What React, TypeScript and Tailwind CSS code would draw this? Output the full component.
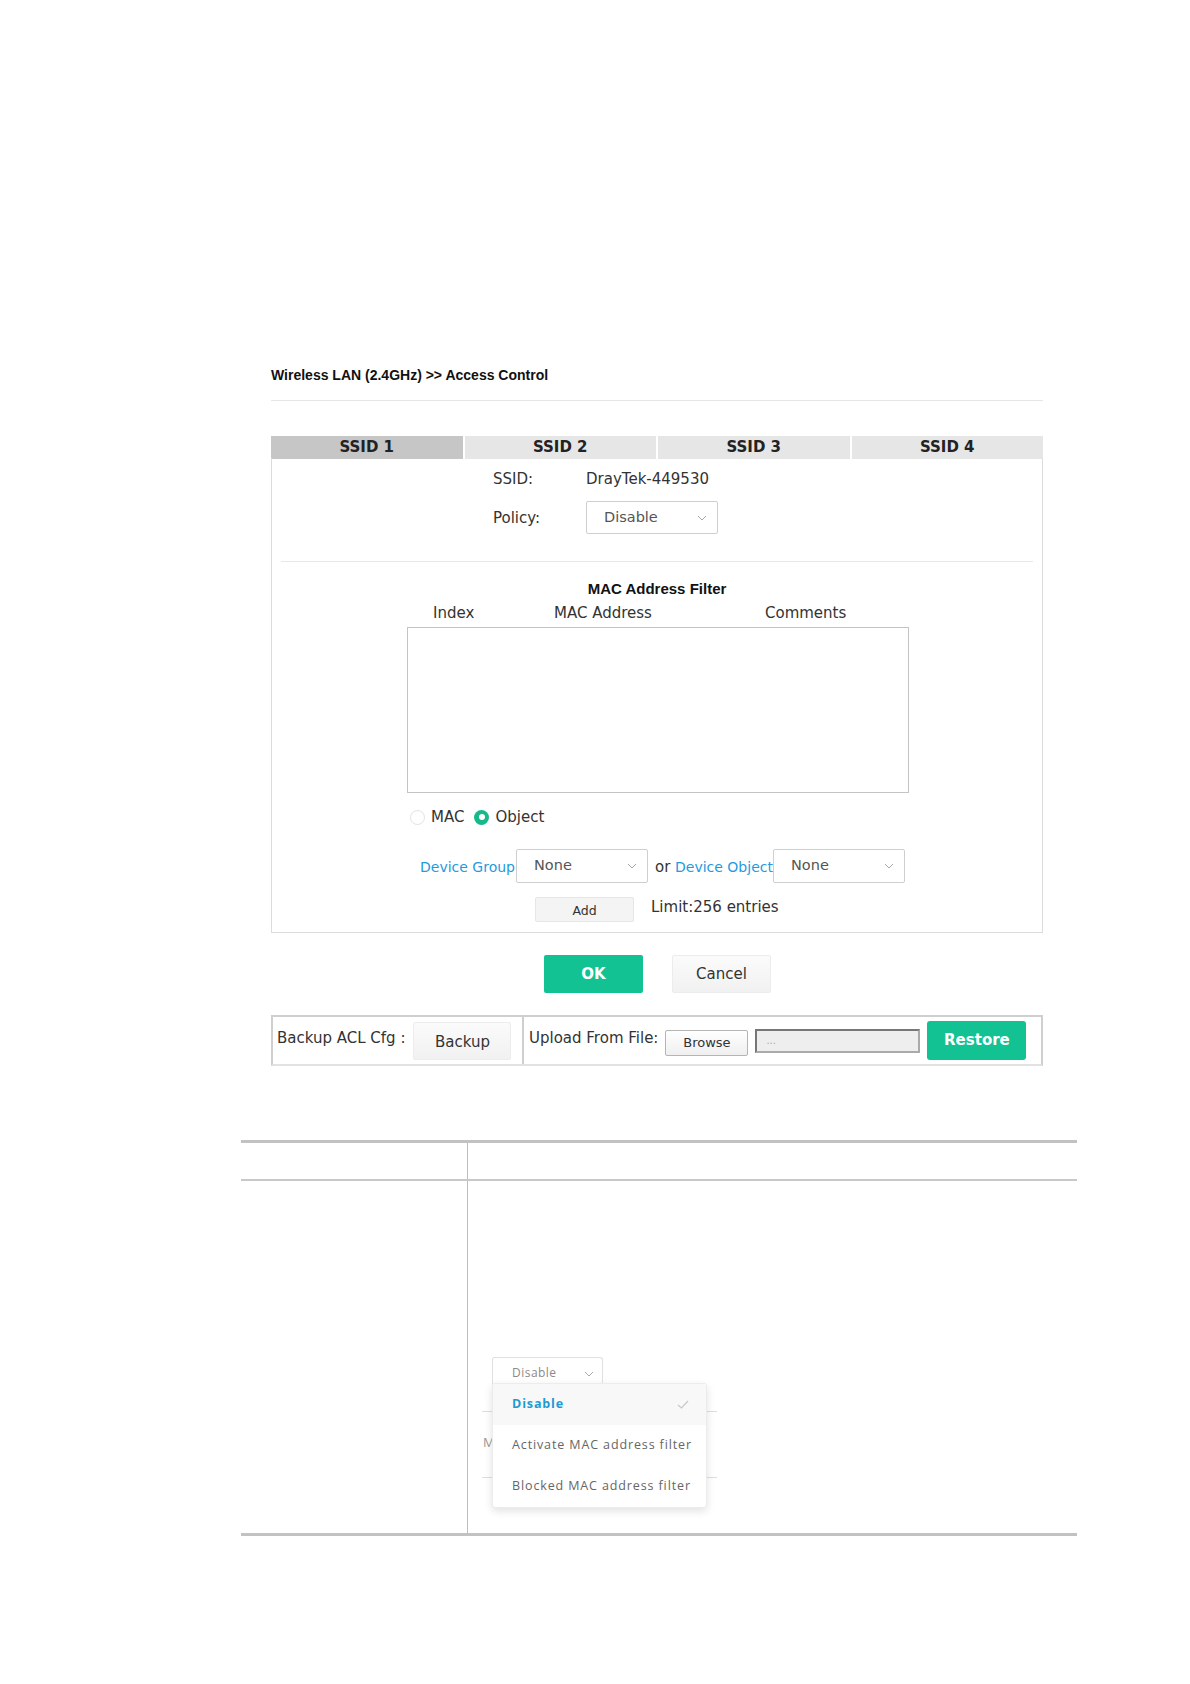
import React from 'react';

const body = { fontFamily: '"DejaVu Sans", Verdana, sans-serif' };
const arial = { fontFamily: '"Liberation Sans", Arial, sans-serif' };
const open = { fontFamily: '"Open Sans", "DejaVu Sans", sans-serif' };

function Chevron({ className = '' }: { className?: string }) {
    return (
        <svg width="10" height="6" viewBox="0 0 10 6" className={className}>
            <polyline points="1,1 5,5 9,1" fill="none" stroke="#a8a8a8" strokeWidth="1" />
        </svg>
    );
}

function Select({ value, width }: { value: string; width: string }) {
    return (
        <div className={`${width} h-full flex items-center justify-between border border-[#cfcfcf] rounded-[2px] bg-white pl-[17px] pr-[10px] text-[14.5px] text-[#555]`}>
            <span>{value}</span>
            <Chevron />
        </div>
    );
}

export default function App() {
    const tabs = ['SSID 1', 'SSID 2', 'SSID 3', 'SSID 4'];

    return (
        <div className="w-[1190px] h-[1684px] bg-white text-[#333] overflow-hidden" style={body}>
            <div className="ml-[271px] w-[772px] pt-[366px] flex flex-col">
                {/* Title */}
                <div className="h-[18px] leading-[18px] text-[14px] font-bold text-[#111]" style={arial}>
                    Wireless LAN (2.4GHz) &gt;&gt; Access Control
                </div>
                <div className="mt-[16px] h-px bg-[#e6e6e6]" />

                {/* Tabs */}
                <div className="mt-[35px] h-[22px] grid grid-cols-4 gap-[2px]">
                    {tabs.map((t, i) => (
                        <div
                            key={t}
                            className={`flex items-center justify-center text-[15px] font-bold text-[#222] ${i === 0 ? 'bg-[#c6c6c6]' : 'bg-[#e6e6e6]'}`}
                        >
                            {t}
                        </div>
                    ))}
                </div>

                {/* Panel */}
                <div className="h-[475px] border border-t-0 border-[#dcdcdc] flex flex-col text-[15px]">
                    <div className="mt-[11px] h-[20px] flex items-center pl-[221px]">
                        <span className="w-[93px]">SSID:</span>
                        <span>DrayTek-449530</span>
                    </div>
                    <div className="mt-[12px] h-[33px] flex items-center pl-[221px]">
                        <span className="w-[93px] pt-[2px]">Policy:</span>
                        <Select value="Disable" width="w-[132px]" />
                    </div>
                    <div className="mt-[27px] mx-[9px] h-px bg-[#e8e8e8]" />

                    <div className="mt-[18px] h-[18px] leading-[18px] text-center text-[15px] font-bold text-[#111]" style={arial}>
                        MAC Address Filter
                    </div>
                    <div className="mt-[6px] h-[18px] leading-[18px] flex pl-[161px]">
                        <span className="w-[121px]">Index</span>
                        <span className="w-[211px]">MAC Address</span>
                        <span>Comments</span>
                    </div>
                    <div className="mt-[5px] ml-[135px] w-[502px] h-[166px] border border-[#c4c4c4]" />

                    {/* Radios */}
                    <div className="mt-[14px] h-[20px] ml-[138px] flex items-center">
                        <span className="w-[15px] h-[15px] rounded-full border border-[#e2e2e2] bg-white" />
                        <span className="ml-[6px]">MAC</span>
                        <span className="ml-[10px] w-[15px] h-[15px] rounded-full bg-[#17b98a] flex items-center justify-center">
                            <span className="w-[6px] h-[6px] rounded-full bg-white" />
                        </span>
                        <span className="ml-[6px]">Object</span>
                    </div>

                    {/* Device row */}
                    <div className="mt-[22px] h-[34px] flex items-center text-[14px]">
                        <span className="ml-[148px] w-[96px] text-[#1f9be0] pt-[3px] whitespace-nowrap">Device Group</span>
                        <Select value="None" width="w-[132px]" />
                        <span className="w-[27px] pl-[7px] text-[15px] pt-[3px]">or</span>
                        <span className="w-[98px] text-[#1f9be0] pt-[3px] whitespace-nowrap">Device Object</span>
                        <Select value="None" width="w-[132px]" />
                    </div>

                    {/* Add row */}
                    <div className="mt-[14px] h-[25px] flex items-center">
                        <button className="ml-[263px] w-[99px] h-full bg-[#f4f4f4] border border-[#e6e6e6] rounded-[2px] text-[12.5px] text-[#333] pt-[3px]">
                            Add
                        </button>
                        <span className="ml-[17px] -mt-[4px]">Limit:256 entries</span>
                    </div>
                </div>

                {/* OK / Cancel */}
                <div className="mt-[22px] h-[38px] flex gap-[29px] pl-[273px]">
                    <button className="w-[99px] h-full rounded-[2px] bg-[#12c292] text-white text-[15px] font-bold">OK</button>
                    <button className="w-[99px] h-full rounded-[2px] bg-gradient-to-b from-[#fbfbfb] to-[#f1f1f1] border border-[#ececec] text-[15px] text-[#333]">
                        Cancel
                    </button>
                </div>

                {/* Backup / Restore */}
                <div className="mt-[22px] h-[51px] border-2 border-[#cfcfcf] border-b-[#e2e2e2] flex">
                    <div className="w-[249px] flex items-center pl-[4px] text-[15px]">
                        <span className="pb-[4px] whitespace-nowrap">Backup ACL Cfg :</span>
                        <button className="ml-[8px] w-[98px] h-[38px] rounded-[2px] bg-gradient-to-b from-[#fbfbfb] to-[#f1f1f1] border border-[#ececec] text-[15px] text-[#333] pt-[3px]">
                            Backup
                        </button>
                    </div>
                    <div className="flex-1 border-l-2 border-[#cfcfcf] flex items-center pl-[5px] text-[15px]">
                        <span className="pb-[4px] whitespace-nowrap">Upload From File:</span>
                        <button className="ml-[7px] w-[83px] h-[26px] mt-[4px] rounded-[2px] bg-gradient-to-b from-white to-[#efefef] border border-[#b5b5b5] text-[13px] text-[#333]">
                            Browse
                        </button>
                        <div className="ml-[7px] w-[165px] h-[24px] bg-[#eeeeee] border-2 border-[#777] border-r-[#aaa] border-b-[#aaa] flex items-center pl-[9px] text-[10px] text-[#aaa]">
                            ...
                        </div>
                        <button className="ml-[7px] w-[99px] h-[39px] rounded-[3px] bg-[#12c292] text-white text-[15px] font-bold">
                            Restore
                        </button>
                    </div>
                </div>
            </div>

            {/* Lower table */}
            <div className="mt-[74px] ml-[241px] w-[836px] border-t-[3px] border-b-[3px] border-[#c2c2c2]">
                <div className="h-[38px] grid grid-cols-[227px_1fr] border-b-2 border-[#c8c8c8]">
                    <div className="border-r-[1.5px] border-[#bdbdbd]" />
                    <div />
                </div>
                <div className="h-[352px] grid grid-cols-[227px_1fr]">
                    <div className="border-r-[1.5px] border-[#bdbdbd]" />
                    <div className="pl-[24px] pt-[176px]">
                        <div className="relative w-[225px]" style={open}>
                            <div className="w-[111px] h-[30px] flex items-center justify-between border border-[#e0e0e0] border-b-0 rounded-t-[3px] pl-[19px] pr-[8px] text-[12px] tracking-[0.04em] text-[#8a8a8a]">
                                <span>Disable</span>
                                <Chevron className="mt-[3px]" />
                            </div>
                            <div className="mt-[24px] -ml-[10px] w-[235px] h-[67px] border-t border-b border-[#dedede] flex items-center text-[13px] text-[#999]">
                                <span className="pl-[1px] pb-[4px]">M</span>
                            </div>

                            {/* Open dropdown menu */}
                            <div className="absolute top-[26px] left-0 w-[215px] h-[125px] bg-white border border-[#ececec] rounded-[3px] shadow-[0_3px_8px_rgba(0,0,0,0.12)] flex flex-col text-[12.5px] tracking-[0.07em]">
                                <div className="h-[41px] bg-[#f8f8f8] flex items-center justify-between pl-[19px] pr-[17px]">
                                    <span className="font-bold text-[#1c9bd6]">Disable</span>
                                    <svg width="12" height="9" viewBox="0 0 12 9">
                                        <polyline points="1,5 4.5,8 11,1" fill="none" stroke="#c8c8c8" strokeWidth="1.2" />
                                    </svg>
                                </div>
                                <div className="h-[42px] flex items-center pl-[19px] text-[#666]">Activate MAC address filter</div>
                                <div className="h-[41px] flex items-center pl-[19px] text-[#666]">Blocked MAC address filter</div>
                            </div>
                        </div>
                    </div>
                </div>
            </div>
        </div>
    );
}
